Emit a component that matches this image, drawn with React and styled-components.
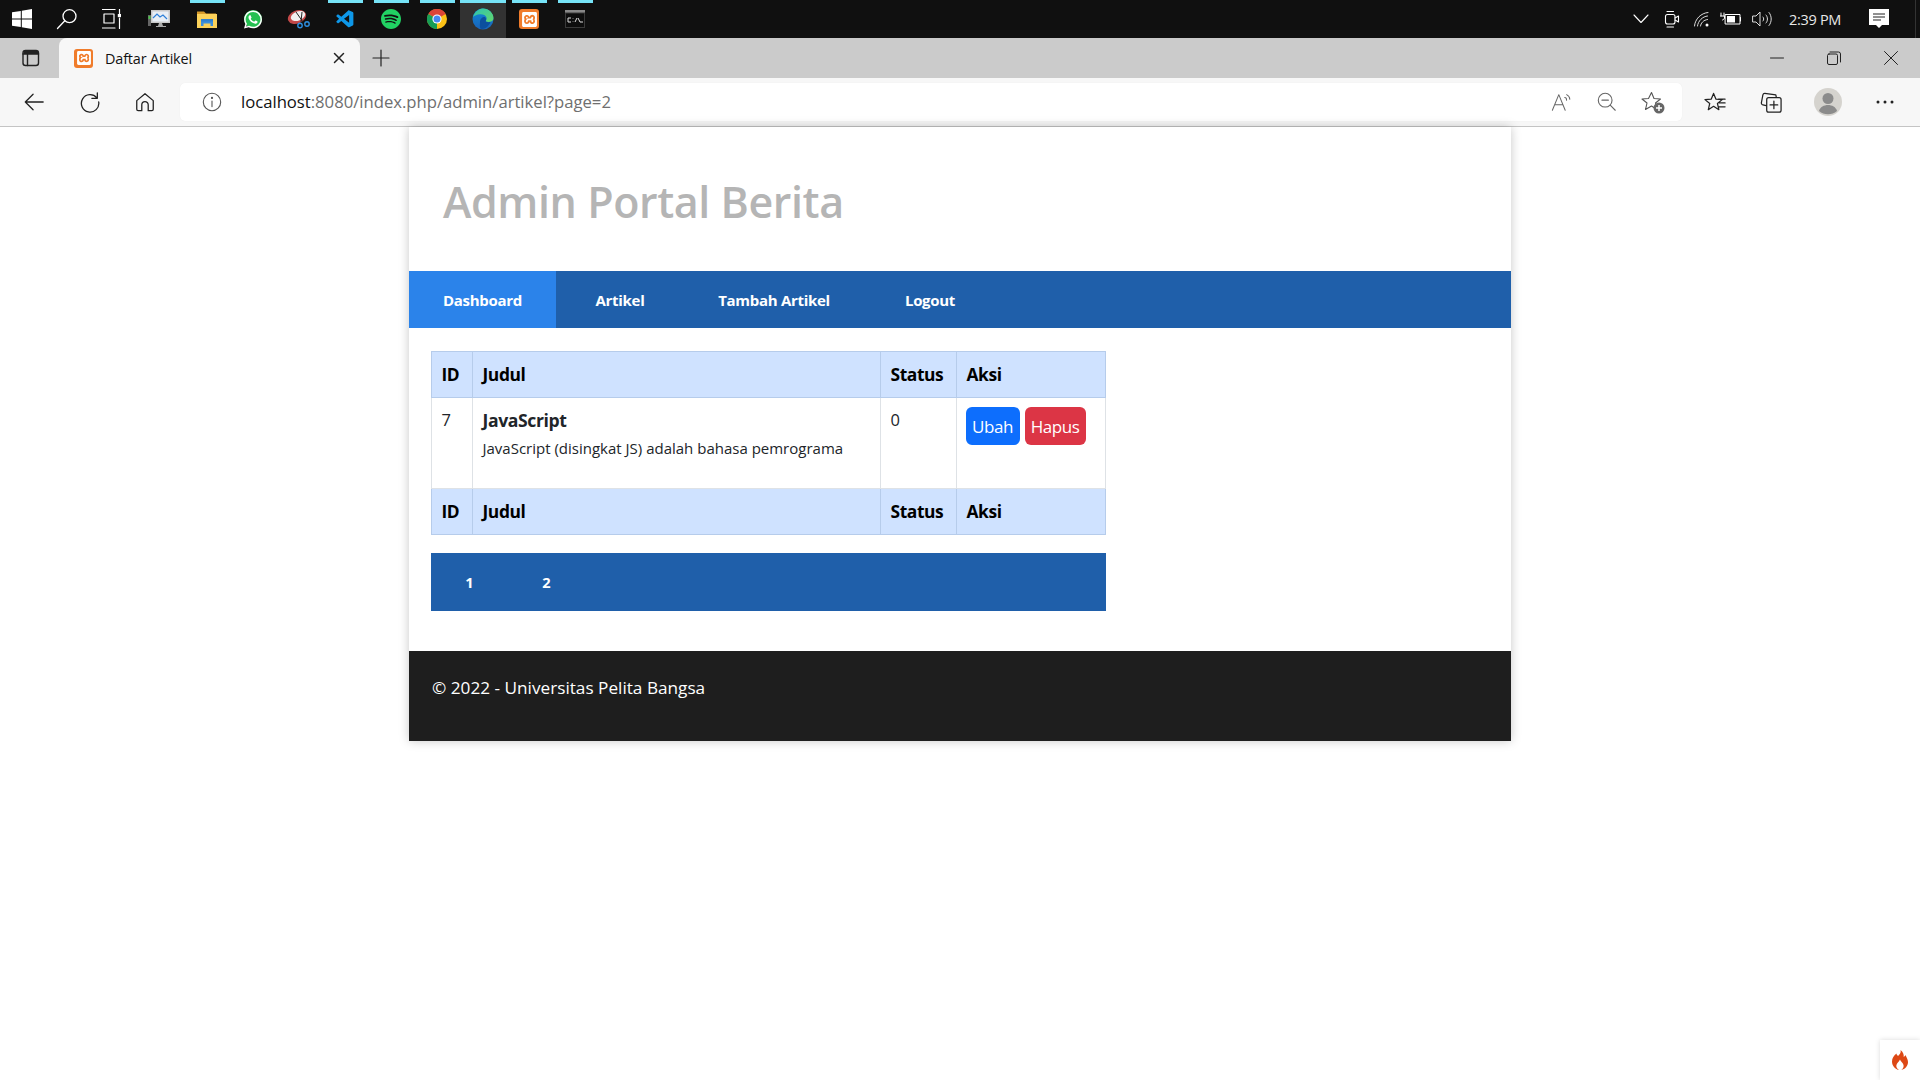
import React from "react";
import styled, { createGlobalStyle } from "styled-components";
import { SiXampp, SiSpotify, SiWhatsapp } from "react-icons/si";
import { VscVscode } from "react-icons/vsc";

const Global = createGlobalStyle`
  html, body { margin: 0; padding: 0; background: #fff; }
  body { font-family: "Open Sans", "Noto Sans", sans-serif; height: 1080px; overflow: hidden; }
  * { box-sizing: border-box; }
`;
const Screen = styled.div`display:flex;flex-direction:column;height:1080px;position:relative;`;
const Taskbar = styled.div`height:38px;background:#101010;display:flex;align-items:stretch;flex:none;`;
const TaskSlot = styled.div`
  width:${p=>p.$w||46}px;flex:none;display:flex;align-items:center;justify-content:center;position:relative;
  background:${p=>p.$active?"#323232":"transparent"};
  ${p=>p.$running?`&::before{content:"";position:absolute;top:0;left:${p.$active?0:6}px;right:${p.$active?0:5}px;height:3px;background:#76e3f7;}`:""}
`;
const Spacer = styled.div`flex:1;`;
const Tray = styled.div`display:flex;align-items:center;color:#fff;`;
const TrayItem = styled.div`width:${p=>p.$w}px;flex:none;display:flex;align-items:center;justify-content:center;`;
const Clock = styled.span`font:400 14.5px "Open Sans",sans-serif;letter-spacing:-.3px;color:#e8e8e8;width:74px;text-align:center;`;
const TrayEnd = styled.div`width:5px;flex:none;border-left:1px solid #333;height:38px;margin-left:9px;`;

const TabStrip = styled.div`height:40px;background:#cbcbcb;display:flex;align-items:stretch;flex:none;`;
const SideBtn = styled.div`width:59px;flex:none;display:flex;align-items:center;justify-content:center;padding-left:2px;`;
const Tab = styled.div`width:301px;flex:none;background:#f7f7f7;border-radius:8px 8px 0 0;display:flex;align-items:center;padding:0 15px 0 15px;color:#111;font-size:14.4px;letter-spacing:-.15px;`;
const TabTitle = styled.span`margin-left:12px;flex:1;`;
const NewTab = styled.div`width:42px;flex:none;display:flex;align-items:center;justify-content:center;`;
const WinBtns = styled.div`display:flex;margin-left:auto;align-items:center;`;
const WinBtn = styled.div`width:${p=>p.$w}px;flex:none;display:flex;align-items:center;justify-content:center;`;

const Toolbar = styled.div`height:49px;background:#f7f7f7;border-bottom:1px solid #c4c4c4;display:flex;align-items:center;flex:none;`;
const NavIcon = styled.div`width:${p=>p.$w||56}px;flex:none;display:flex;align-items:center;justify-content:center;`;
const Address = styled.div`width:1502px;height:38px;margin:0 6px 1px 2px;padding-right:6px;flex:none;background:#fff;border-radius:5px;display:flex;align-items:center;box-shadow:0 0 1px rgba(0,0,0,.08);`;
const AddressInfo = styled.div`width:61px;flex:none;display:flex;align-items:center;justify-content:center;padding-left:3px;`;
const Url = styled.div`flex:1;font-size:16.7px;color:#6f6f6f;letter-spacing:-.02px;`;
const Host = styled.span`color:#111;`;

const Page = styled.div`flex:1;display:flex;flex-direction:column;align-items:center;background:#fff;`;
const Container = styled.div`width:1102px;background:#fff;box-shadow:0 0 10px rgba(0,0,0,.22);`;
const Header = styled.header`height:144px;padding:0 34px;display:flex;align-items:center;`;
const Title = styled.h1`margin:5px 0 0;font-size:43px;font-weight:600;color:#b5b5b5;letter-spacing:-.42px;`;
const Nav = styled.nav`height:57px;background:#1f5faa;display:flex;align-items:stretch;`;
const NavLink = styled.a`
  width:${p=>p.$w}px;flex:none;display:flex;align-items:center;justify-content:center;
  color:#fff;font-size:15px;font-weight:700;letter-spacing:-.3px;background:${p=>p.$active?"#2b83ea":"transparent"};
`;
const Section = styled.section`padding:23px 22px 40px;`;
const Table = styled.table`width:674px;border-collapse:collapse;table-layout:fixed;color:#212529;font-size:16.5px;`;
const Col = styled.col`width:${p=>p.$w}px;`;
const Th = styled.th`height:46px;background:#cfe2ff;border:1.5px solid #b6cceb;padding:0 9.5px 1px;text-align:left;color:#000;font-weight:700;font-size:17.4px;letter-spacing:-.4px;`;
const Td = styled.td`height:91px;border:1.5px solid #dee2e6;padding:10px 9.5px;vertical-align:top;letter-spacing:-.3px;`;
const ArticleTitle = styled.b`display:block;font-size:17.6px;font-weight:700;letter-spacing:-.4px;color:#212529;line-height:24px;`;
const Excerpt = styled.p`margin:4px 0 0;font-size:15px;letter-spacing:0;line-height:24px;color:#212529;white-space:nowrap;`;
const Actions = styled.div`display:flex;gap:5px;margin:-1px 0 0 -1px;`;
const Btn = styled.a`height:38px;width:${p=>p.$w}px;display:flex;align-items:center;justify-content:center;border-radius:6px;color:#fff;font-size:17px;letter-spacing:-.45px;background:${p=>p.$bg};`;
const Pager = styled.div`width:675px;height:58px;margin-top:18px;background:#1f5faa;display:flex;align-items:center;`;
const PageLink = styled.a`width:77px;flex:none;text-align:center;color:#fff;font-size:14.6px;font-weight:700;`;
const Footer = styled.footer`height:90px;background:#1e1e1e;color:#fff;padding:25px 23px;font-size:17.2px;line-height:24px;`;
const Toolbar2 = styled.div`position:absolute;right:0;bottom:0;width:40px;height:40px;background:#fff;box-shadow:0 0 5px rgba(0,0,0,.15);display:flex;align-items:center;justify-content:center;`;
const XamppBadge = styled.div`width:${p=>p.$s}px;height:${p=>p.$s}px;border-radius:3px;background:#f07c2b;display:flex;align-items:center;justify-content:center;color:#fff;`;

const S = ({w=22,h=22,vb="0 0 24 24",c="#222",sw=1.5,children})=>(
  <svg width={w} height={h} viewBox={vb} fill="none" stroke={c} strokeWidth={sw} strokeLinecap="round" strokeLinejoin="round">{children}</svg>
);

const Win = ()=>(<svg width="20" height="20" viewBox="0 0 20 20" fill="#fff"><path d="M0 3.2l8.8-1.3v7.6H0zM9.8 1.7L20 0v9.5H9.8zM0 10.5h8.8v7.6L0 16.8zM9.8 10.5H20V20L9.8 18.3z"/></svg>);
const Search = ()=>(<S c="#fff" sw={1.3} w={22} h={22} vb="0 0 22 22"><circle cx="13.5" cy="8.2" r="6.5"/><path d="M8.8 12.8L1.5 20.5"/></S>);
const TaskView = ()=>(<S c="#fff" sw={1.2} w={20} h={20} vb="0 0 20 20"><path d="M0.5 0.5H13M2 5h10v9H2zM0.5 19H13M17.5 0.5V5M17.5 9v10.5"/><rect x="15.8" y="5" width="3.2" height="3.2" fill="#fff" stroke="none"/></S>);
const Monitor = ()=>(<svg width="22" height="20" viewBox="0 0 22 20"><rect x="0" y="6" width="3" height="11" fill="#666"/><rect x=".5" y="7" width="2" height="3" fill="#4cc14c"/><rect x="3" y="1" width="19" height="13" fill="#c8c8c8"/><rect x="4.5" y="2.5" width="16" height="10" fill="#e8eef5"/><path d="M5 9l4-4 3 3 3-2 4 4" fill="none" stroke="#2f80d8" strokeWidth="1.2"/><path d="M11 14h3l1 3h3v1H8v-1h2z" fill="#aaa"/></svg>);
const Folder = ()=>(<svg width="20" height="18" viewBox="0 0 20 18"><path d="M0 1.5h7l2 2h10v2H0z" fill="#d69a2a"/><rect y="4" width="20" height="14" fill="#fbd15a"/><path d="M4 16v-5.5h12V16h-2.5v-2.5h-7V16z" fill="#3e8fd9"/><rect x="4" y="9" width="12" height="2.5" fill="#2f80d0"/></svg>);
const WhatsWrap = styled.div`width:18px;height:18px;border-radius:50%;background:#25c051;display:flex;align-items:center;justify-content:center;color:#fff;`;
const Whats = ()=>(<WhatsWrap><SiWhatsapp size={19}/></WhatsWrap>);
const Snip = ()=>(<svg width="24" height="20" viewBox="0 0 24 20"><ellipse cx="10" cy="8" rx="9.5" ry="6.5" fill="#c24848" transform="rotate(-22 10 8)"/><ellipse cx="11" cy="7" rx="7.5" ry="4.6" fill="#f2eeee" transform="rotate(-22 11 7)"/><path d="M9 3l7 10M15 3l-1 10" stroke="#222" strokeWidth="1" fill="none"/><circle cx="13" cy="16.5" r="2.2" fill="none" stroke="#2d8ee0" strokeWidth="1.4"/><circle cx="20" cy="15" r="2.2" fill="none" stroke="#2d8ee0" strokeWidth="1.4"/></svg>);
const Chrome = ()=>(<svg width="20" height="20" viewBox="0 0 20 20"><circle cx="10" cy="10" r="10" fill="#fbc116"/><path d="M10 10L1.3 5A10 10 0 0 1 18.7 5z" fill="#dc4437"/><path d="M10 10L1.3 5A10 10 0 0 0 10 20z" fill="#169d56"/><circle cx="10" cy="10" r="4.6" fill="#fff"/><circle cx="10" cy="10" r="3.5" fill="#4688f1"/></svg>);
const Edge = ()=>(<svg width="22" height="22" viewBox="0 0 22 22"><defs><linearGradient id="eg" x1="0" y1="0" x2="1" y2="1"><stop offset="0" stopColor="#2cc2b4"/><stop offset="1" stopColor="#64d76a"/></linearGradient><linearGradient id="eb" x1="0" y1="0" x2="0" y2="1"><stop offset="0" stopColor="#0f88d8"/><stop offset="1" stopColor="#1a63b8"/></linearGradient></defs><circle cx="11" cy="11" r="10.5" fill="url(#eb)"/><path d="M1 9C3 2 9 .5 11 .5c6 0 10.500 5 10.500 9.500 0 2.500-2 4-5 4-2 0-3-1-3-1 1-1 1.500-2 1-3.500C13.500 7 11 6 8 6.200 5 6.500 2.500 7.500 1 9z" fill="url(#eg)"/><path d="M8 14c0-3 2-5 5-5 1 1 1.500 3 .5 4.200 1 1 3 1.300 5 .6-1 3-4 7.200-8.500 7.200C7 21 8 16 8 14z" fill="#0c4f9e"/></svg>);
const Cmd = ()=>(<svg width="20" height="18" viewBox="0 0 20 18"><rect width="20" height="18" fill="#3a3a3a"/><rect y="0" width="20" height="2.500" fill="#888"/><rect x="1" y="3.500" width="18" height="13.500" fill="#0d0d0d"/><path d="M3 8h3M3 8v4h3M8 8.500v.5M8 11.500v.5M10 12l2-4M13 8l2 4h3" stroke="#ddd" strokeWidth="1" fill="none"/></svg>);

const Flame = ()=>(<svg width="16" height="20" viewBox="0 0 16 20"><path d="M8.500 0c.8 3-1 4.300-2.500 6C5 5 4.500 4.500 4.500 3.500 2 5.500 0 8 0 11.500 0 16 3.500 19.500 7 20c-2-1.200-3-3-2.600-4.800C4.800 13 6.800 12 8 9.500c.4 2 2.800 3 3.500 5.500.5 2-.5 3.800-2.200 5C13 19.300 16 16 16 12c0-3-1.800-4.800-2.500-7-.5 1-1 1.500-1.800 2C12 4.500 11 1.500 8.500 0z" fill="#dd4814"/></svg>);

const slots=[
  {w:44,el:<Win/>},{w:45,el:<Search/>},{w:45,el:<TaskView/>},{w:50,el:<Monitor/>},
  {w:46,el:<Folder/>,r:1},{w:46,el:<Whats/>},{w:46,el:<Snip/>},{w:46,el:<VscVscode size={21} color="#0e97e8"/>,r:1},
  {w:46,el:<SiSpotify size={20} color="#21d363" />,r:1},{w:46,el:<Chrome/>,r:1},{w:46,el:<Edge/>,r:1,a:1},
  {w:46,el:<XamppBadge $s={20}><SiXampp size={15}/></XamppBadge>,r:1},{w:46,el:<Cmd/>,r:1},
];

const Row = ({cells})=>(<tr>{cells.map(c=><Th key={c}>{c}</Th>)}</tr>);

export default function App(){
  const heads=["ID","Judul","Status","Aksi"];
  return (<>
    <Global/>
    <Screen>
      <Taskbar>
        {slots.map((s,i)=><TaskSlot key={i} $w={s.w} $running={s.r} $active={s.a}>{s.el}</TaskSlot>)}
        <Spacer/>
        <Tray>
          <TrayItem $w={30}><S c="#fff" sw={1.1} w={18} h={18} vb="0 0 18 18"><path d="M2 5l7 7.500L16 5"/></S></TrayItem>
          <TrayItem $w={32}><S c="#fff" sw={1.1} w={18} h={20} vb="0 0 18 20"><rect x="2.500" y="5.500" width="9.500" height="9.500" rx="2"/><path d="M12 9l3.500-2v6L12 11M4 2.500h6.500M4 18h6.500"/></S></TrayItem>
          <TrayItem $w={28}><S c="#ddd" sw={1} w={18} h={18} vb="0 0 18 18"><path d="M1.500 16C2 9 8 3 15 2.500M4.500 16c.5-5 5-9.500 10-10M7.500 16c.4-3 3-6 7-6.500"/><circle cx="14" cy="15" r="1.500" fill="#fff" stroke="none"/></S></TrayItem>
          <TrayItem $w={30}><S c="#fff" sw={1} w={22} h={14} vb="0 0 22 14"><rect x="5.500" y="2.500" width="14.500" height="9.500"/><rect x="7" y="4" width="8" height="6.500" fill="#fff" stroke="none"/><path d="M20.500 5.500v3.500M1 1v3M4 1v3M.5 4h4v2.500L2.500 8"/></S></TrayItem>
          <TrayItem $w={32}><S c="#ddd" sw={1} w={22} h={18} vb="0 0 22 18"><path d="M2 6h3l4-4v14l-4-4H2zM12 7c1 1 1 3 0 4M15 5c2 2 2 6 0 8M18 2.500c3 3.500 3 9.500 0 13"/></S></TrayItem>
          <Clock>2:39 PM</Clock>
          <TrayItem $w={54}><svg width="20" height="20" viewBox="0 0 20 20"><path d="M0 0h20v16h-7l-3 3-3-3H0z" fill="#fff"/><path d="M4 5h12M4 8h12M4 11h8" stroke="#222" strokeWidth="1"/></svg></TrayItem>
          <TrayEnd/>
        </Tray>
      </Taskbar>
      <TabStrip>
        <SideBtn><S c="#222" sw={1.4} w={20} h={20} vb="0 0 20 20"><rect x="2" y="2.500" width="15.500" height="15" rx="2.500"/><path d="M6.500 6v11.500M2 6h15.500" /><rect x="2.500" y="3" width="14.500" height="3" fill="#222" stroke="none"/></S></SideBtn>
        <Tab>
          <XamppBadge $s={19}><SiXampp size={14}/></XamppBadge>
          <TabTitle>Daftar Artikel</TabTitle>
          <S c="#222" sw={1.5} w={12} h={12} vb="0 0 12 12"><path d="M1.500 1.500l9 9M10.500 1.500l-9 9"/></S>
        </Tab>
        <NewTab><S c="#222" sw={1.2} w={18} h={18} vb="0 0 18 18"><path d="M9 1v16M1 9h16"/></S></NewTab>
        <WinBtns>
          <WinBtn $w={56}><S c="#222" sw={1} w={14} h={14} vb="0 0 14 14"><path d="M0.500 7h13"/></S></WinBtn>
          <WinBtn $w={57}><S c="#222" sw={1} w={14} h={14} vb="0 0 14 14"><rect x=".5" y="3" width="10" height="10.500" rx="1.500"/><path d="M3 1h8.500a2 2 0 0 1 2 2v8"/></S></WinBtn>
          <WinBtn $w={58}><S c="#222" sw={1} w={14} h={14} vb="0 0 14 14"><path d="M.5.5l13 13M13.500.5l-13 13"/></S></WinBtn>
        </WinBtns>
      </TabStrip>
      <Toolbar>
        <NavIcon $w={68}><S sw={1.4} c="#222" w={22} h={22}><path d="M22 12H2.500M11 3.500L2.500 12l8.500 8.500"/></S></NavIcon>
        <NavIcon $w={44}><S sw={1.4} c="#222" w={22} h={22}><path d="M19.500 7.500A9.500 9.500 0 1 0 21.500 12M20 2v6h-6"/></S></NavIcon>
        <NavIcon $w={66}><S sw={1.4} c="#222" w={22} h={22}><path d="M3 10.500L12 3l9 7.500V20a1.500 1.500 0 0 1-1.500 1.500H15.500V15a3.500 3.500 0 0 0-7 0v6.500H4.500A1.500 1.500 0 0 1 3 20z"/></S></NavIcon>
        <Address>
          <AddressInfo><S sw={1.2} c="#555" w={22} h={22}><circle cx="12" cy="12" r="9.500"/><path d="M12 11v6"/><circle cx="12" cy="7.500" r=".6" fill="#555"/></S></AddressInfo>
          <Url><Host>localhost</Host>:8080/index.php/admin/artikel?page=2</Url>
          <NavIcon $w={46}><S sw={1.1} c="#666" w={22} h={22}><path d="M1.500 21L8.500 4l7 17M4 15h9M15 7c1 0 2 1 2 3M17 4c2 1 3.500 2.500 3.500 5"/></S></NavIcon>
          <NavIcon $w={44}><S sw={1.2} c="#666" w={22} h={22}><circle cx="10" cy="10" r="7.500"/><path d="M6.500 10h7M15.500 15.500L21 21"/></S></NavIcon>
          <NavIcon $w={47}><svg width="24" height="24" viewBox="0 0 24 24" fill="none"><path d="M10.500 2.500l2.500 6 6.500.5-5 4 1.500 6.500-5.500-3.500-6 3.500 1.500-6.500-5-4 6.500-.5z" stroke="#555" strokeWidth="1.100" strokeLinejoin="round"/><circle cx="18" cy="18" r="5.500" fill="#666"/><path d="M18 15v6M15 18h6" stroke="#fff" strokeWidth="1.500"/></svg></NavIcon>
        </Address>
        <NavIcon $w={55}><S sw={1.3} c="#222" w={23} h={23}><path d="M10 2.500l2.500 6 6.500.5-5 4 1.500 6.500L10 16l-5.500 3.500L6 13 1 9l6.500-.5zM15 8.500h7M16 12.500h6M15 16.500h7"/></S></NavIcon>
        <NavIcon $w={56}><S sw={1.3} c="#222" w={23} h={23}><path d="M17 6.500L16.500 4 5 2.500a2 2 0 0 0-2 1.500L1.500 12a2 2 0 0 0 1.500 2.500l3.500.8"/><rect x="7" y="7" width="15" height="15" rx="2"/><path d="M14.500 10.500v8M10.500 14.500h8"/></S></NavIcon>
        <NavIcon $w={58}><svg width="28" height="28" viewBox="0 0 28 28"><circle cx="14" cy="14" r="14" fill="#d5d3ce"/><circle cx="14" cy="10.500" r="5.500" fill="#8b8b8b"/><path d="M5 23c1-4 5-6 9-6s8 2 9 6a14 14 0 0 1-18 0z" fill="#8b8b8b"/></svg></NavIcon>
        <NavIcon $w={56}><svg width="18" height="4" viewBox="0 0 18 4" fill="#222"><circle cx="2" cy="2" r="1.500"/><circle cx="9" cy="2" r="1.500"/><circle cx="16" cy="2" r="1.500"/></svg></NavIcon>
      </Toolbar>
      <Page>
        <Container>
          <Header><Title>Admin Portal Berita</Title></Header>
          <Nav>
            <NavLink $w={147} $active>Dashboard</NavLink>
            <NavLink $w={128}>Artikel</NavLink>
            <NavLink $w={180}>Tambah Artikel</NavLink>
            <NavLink $w={132}>Logout</NavLink>
          </Nav>
          <Section>
            <Table>
              <colgroup><Col $w={41}/><Col $w={408}/><Col $w={76}/><Col $w={149}/></colgroup>
              <thead><Row cells={heads}/></thead>
              <tbody>
                <tr>
                  <Td>7</Td>
                  <Td><ArticleTitle>JavaScript</ArticleTitle><Excerpt>JavaScript (disingkat JS) adalah bahasa pemrograma</Excerpt></Td>
                  <Td>0</Td>
                  <Td><Actions><Btn $w={54} $bg="#0d6efd">Ubah</Btn><Btn $w={61} $bg="#dc3545">Hapus</Btn></Actions></Td>
                </tr>
              </tbody>
              <tfoot><Row cells={heads}/></tfoot>
            </Table>
            <Pager><PageLink>1</PageLink><PageLink>2</PageLink></Pager>
          </Section>
          <Footer>© 2022 - Universitas Pelita Bangsa</Footer>
        </Container>
      </Page>
      <Toolbar2><Flame/></Toolbar2>
    </Screen>
  </>);
}
